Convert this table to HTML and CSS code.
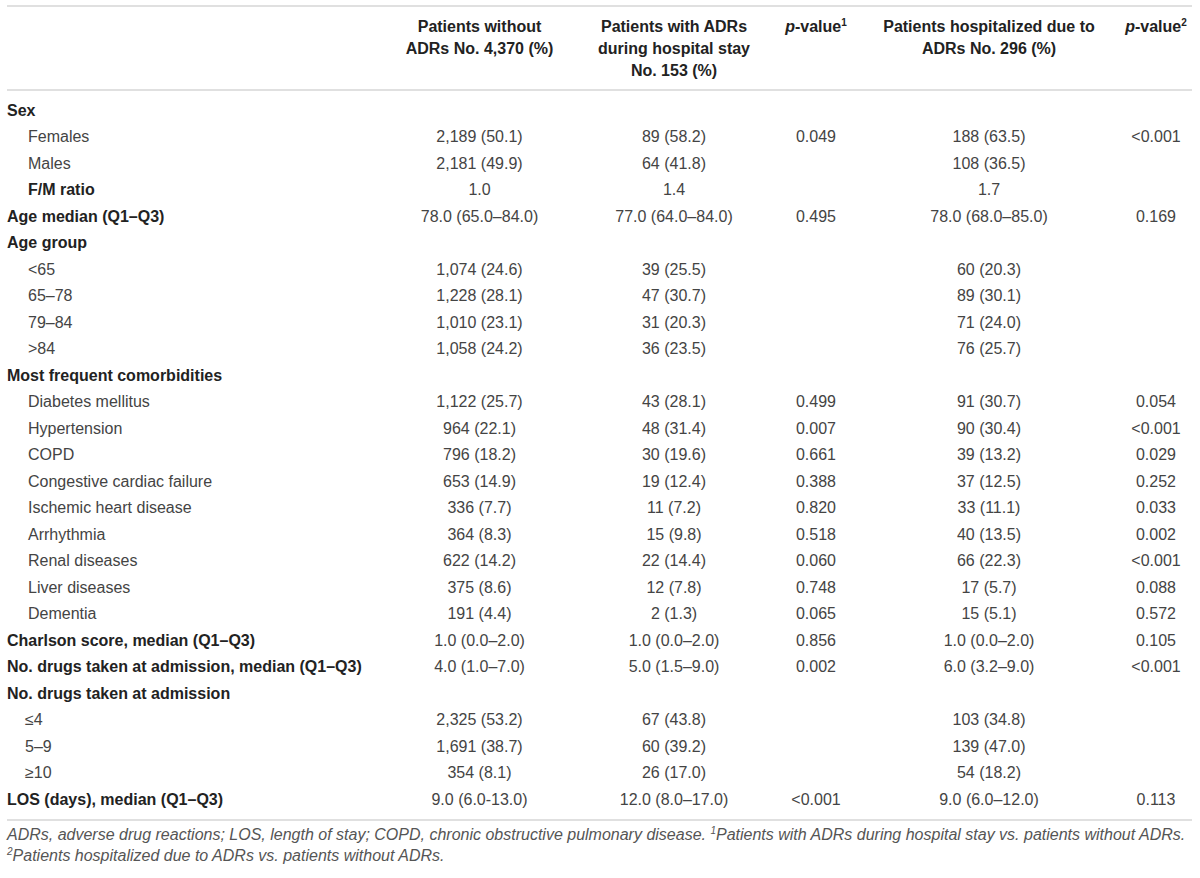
FILE: index.html
```html
<!DOCTYPE html>
<html lang="en">
<head>
    <meta charset="UTF-8">
    <meta name="viewport" content="width=device-width, initial-scale=1.0">
    <title>Patient characteristics</title>
    <link rel="stylesheet" href="styles.css">
</head>
<body>
    <div class="table-wrap">
        <table class="data-table">
            <colgroup>
                <col class="col-label">
                <col class="col-a">
                <col class="col-b">
                <col class="col-p1">
                <col class="col-c">
                <col class="col-p2">
            </colgroup>
            <thead>
                <tr>
                    <th></th>
                    <th>Patients without<br>ADRs No. 4,370 (%)</th>
                    <th>Patients with ADRs<br>during hospital stay<br>No. 153 (%)</th>
                    <th><i>p</i>-value<sup>1</sup></th>
                    <th>Patients hospitalized due to<br>ADRs No. 296 (%)</th>
                    <th><i>p</i>-value<sup>2</sup></th>
                </tr>
            </thead>
            <tbody>
                <tr class="first"><td class="group">Sex</td><td></td><td></td><td></td><td></td><td></td></tr>
                <tr><td class="sub">Females</td><td>2,189 (50.1)</td><td>89 (58.2)</td><td>0.049</td><td>188 (63.5)</td><td>&lt;0.001</td></tr>
                <tr><td class="sub">Males</td><td>2,181 (49.9)</td><td>64 (41.8)</td><td></td><td>108 (36.5)</td><td></td></tr>
                <tr><td class="sub group">F/M ratio</td><td>1.0</td><td>1.4</td><td></td><td>1.7</td><td></td></tr>
                <tr><td class="group">Age median (Q1–Q3)</td><td>78.0 (65.0–84.0)</td><td>77.0 (64.0–84.0)</td><td>0.495</td><td>78.0 (68.0–85.0)</td><td>0.169</td></tr>
                <tr><td class="group">Age group</td><td></td><td></td><td></td><td></td><td></td></tr>
                <tr><td class="sub">&lt;65</td><td>1,074 (24.6)</td><td>39 (25.5)</td><td></td><td>60 (20.3)</td><td></td></tr>
                <tr><td class="sub">65–78</td><td>1,228 (28.1)</td><td>47 (30.7)</td><td></td><td>89 (30.1)</td><td></td></tr>
                <tr><td class="sub">79–84</td><td>1,010 (23.1)</td><td>31 (20.3)</td><td></td><td>71 (24.0)</td><td></td></tr>
                <tr><td class="sub">&gt;84</td><td>1,058 (24.2)</td><td>36 (23.5)</td><td></td><td>76 (25.7)</td><td></td></tr>
                <tr><td class="group">Most frequent comorbidities</td><td></td><td></td><td></td><td></td><td></td></tr>
                <tr><td class="sub">Diabetes mellitus</td><td>1,122 (25.7)</td><td>43 (28.1)</td><td>0.499</td><td>91 (30.7)</td><td>0.054</td></tr>
                <tr><td class="sub">Hypertension</td><td>964 (22.1)</td><td>48 (31.4)</td><td>0.007</td><td>90 (30.4)</td><td>&lt;0.001</td></tr>
                <tr><td class="sub">COPD</td><td>796 (18.2)</td><td>30 (19.6)</td><td>0.661</td><td>39 (13.2)</td><td>0.029</td></tr>
                <tr><td class="sub">Congestive cardiac failure</td><td>653 (14.9)</td><td>19 (12.4)</td><td>0.388</td><td>37 (12.5)</td><td>0.252</td></tr>
                <tr><td class="sub">Ischemic heart disease</td><td>336 (7.7)</td><td>11 (7.2)</td><td>0.820</td><td>33 (11.1)</td><td>0.033</td></tr>
                <tr><td class="sub">Arrhythmia</td><td>364 (8.3)</td><td>15 (9.8)</td><td>0.518</td><td>40 (13.5)</td><td>0.002</td></tr>
                <tr><td class="sub">Renal diseases</td><td>622 (14.2)</td><td>22 (14.4)</td><td>0.060</td><td>66 (22.3)</td><td>&lt;0.001</td></tr>
                <tr><td class="sub">Liver diseases</td><td>375 (8.6)</td><td>12 (7.8)</td><td>0.748</td><td>17 (5.7)</td><td>0.088</td></tr>
                <tr><td class="sub">Dementia</td><td>191 (4.4)</td><td>2 (1.3)</td><td>0.065</td><td>15 (5.1)</td><td>0.572</td></tr>
                <tr><td class="group">Charlson score, median (Q1–Q3)</td><td>1.0 (0.0–2.0)</td><td>1.0 (0.0–2.0)</td><td>0.856</td><td>1.0 (0.0–2.0)</td><td>0.105</td></tr>
                <tr><td class="group">No. drugs taken at admission, median (Q1–Q3)</td><td>4.0 (1.0–7.0)</td><td>5.0 (1.5–9.0)</td><td>0.002</td><td>6.0 (3.2–9.0)</td><td>&lt;0.001</td></tr>
                <tr><td class="group">No. drugs taken at admission</td><td></td><td></td><td></td><td></td><td></td></tr>
                <tr><td class="sub small">≤4</td><td>2,325 (53.2)</td><td>67 (43.8)</td><td></td><td>103 (34.8)</td><td></td></tr>
                <tr><td class="sub small">5–9</td><td>1,691 (38.7)</td><td>60 (39.2)</td><td></td><td>139 (47.0)</td><td></td></tr>
                <tr><td class="sub small">≥10</td><td>354 (8.1)</td><td>26 (17.0)</td><td></td><td>54 (18.2)</td><td></td></tr>
                <tr class="last"><td class="group">LOS (days), median (Q1–Q3)</td><td>9.0 (6.0-13.0)</td><td>12.0 (8.0–17.0)</td><td>&lt;0.001</td><td>9.0 (6.0–12.0)</td><td>0.113</td></tr>
            </tbody>
        </table>
        <p class="table-note">ADRs, adverse drug reactions; LOS, length of stay; COPD, chronic obstructive pulmonary disease. <sup>1</sup>Patients with ADRs during hospital stay vs. patients without ADRs.<br><sup>2</sup>Patients hospitalized due to ADRs vs. patients without ADRs.</p>
    </div>
</body>
</html>
```

FILE: styles.css
```css
body {
    margin: 0;
    font-family: "Liberation Sans", Arial, sans-serif;
    color: #444;
    background-color: #fff;
}
.table-wrap {
    padding: 5px 8px 0 7px;
}
.data-table {
    width: 1185px;
    table-layout: fixed;
    border-collapse: collapse;
    border-top: 2px solid #e0e0e0;
    border-bottom: 2px solid #e0e0e0;
}
.col-label { width: 378px; }
.col-a { width: 189px; }
.col-b { width: 200px; }
.col-p1 { width: 84px; }
.col-c { width: 262px; }
.col-p2 { width: 72px; }

.data-table th {
    font-size: 16px;
    font-weight: bold;
    line-height: 22px;
    color: #222;
    text-align: center;
    vertical-align: top;
    padding: 9px 2px 7px;
    border-bottom: 2px solid #e0e0e0;
}
.data-table th sup {
    font-size: 10px;
    line-height: 0;
}
.data-table td {
    font-size: 16px;
    line-height: 18.5px;
    padding: 4px 4px;
    text-align: center;
    white-space: nowrap;
}
.data-table td.group,
.data-table td.sub {
    text-align: left;
    padding-left: 0;
}
.data-table td.group {
    font-weight: bold;
    color: #222;
}
.data-table td.sub {
    padding-left: 21px;
}
.data-table td.small {
    padding-left: 18px;
}
.data-table tr.first td {
    padding-top: 10.5px;
}
.data-table tr.last td {
    padding-bottom: 10px;
}
.table-note {
    margin: 0;
    padding-top: 3px;
    font-size: 16px;
    font-style: italic;
    line-height: 21px;
    color: #555;
    white-space: nowrap;
}
.table-note sup {
    font-size: 10px;
    line-height: 0;
}
```
